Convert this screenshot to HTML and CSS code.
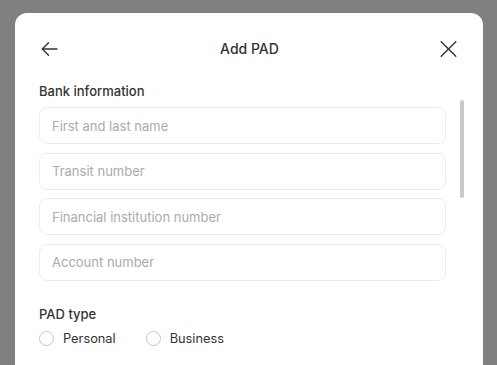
FILE: index.html
```html
<!DOCTYPE html>
<html lang="en">
<head>
    <meta charset="UTF-8">
    <meta name="viewport" content="width=device-width, initial-scale=1.0">
    <title>Add PAD</title>
    <link rel="stylesheet" href="styles.css">
</head>
<body>

    <div class="modal">
        <div class="modal-header">
            <button class="icon-button" aria-label="Back">
                <svg width="24" height="24" viewBox="0 0 24 24" fill="none" stroke="#333" stroke-width="1.4" stroke-linecap="round" stroke-linejoin="round">
                    <path d="M18 12H3.5"/>
                    <path d="M9.5 5.8L3.3 12l6.2 6.2"/>
                </svg>
            </button>
            <h1 class="modal-title">Add PAD</h1>
            <button class="icon-button" aria-label="Close">
                <svg width="24" height="24" viewBox="0 0 24 24" fill="none" stroke="#333" stroke-width="1.4" stroke-linecap="round">
                    <path d="M5.2 4.7l14.6 14.6"/>
                    <path d="M19.8 4.7L5.2 19.3"/>
                </svg>
            </button>
        </div>

        <div class="modal-body">
            <div class="form">
                <p class="section-title">Bank information</p>
                <div class="fields">
                    <input class="field" type="text" placeholder="First and last name">
                    <input class="field" type="text" placeholder="Transit number">
                    <input class="field" type="text" placeholder="Financial institution number">
                    <input class="field" type="text" placeholder="Account number">
                </div>

                <p class="section-title pad-type">PAD type</p>
                <div class="radio-row">
                    <label class="radio"><span class="radio-circle"></span>Personal</label>
                    <label class="radio"><span class="radio-circle"></span>Business</label>
                </div>
            </div>
            <div class="scrollbar"><div class="scroll-thumb"></div></div>
        </div>
    </div>

</body>
</html>
```

FILE: styles.css
```css
:root {
    --overlay-color: #808080;
    --white-color: #ffffff;
    --text-color: #333333;
    --placeholder-color: #ababab;
    --border-color: #ececec;
    --radio-border: #c4c4c4;
    --thumb-color: #c9c9c9;
    --font-family: Inter, "Noto Sans", Arial, sans-serif;
}
html, body {
    margin: 0;
    height: 100%;
    overflow: hidden;
    font-family: var(--font-family);
    color: var(--text-color);
    background-color: var(--overlay-color);
}
body {
    display: flex;
    flex-direction: column;
    padding: 13px 14px 0 15px;
    box-sizing: border-box;
}

/* --- MODAL --- */
.modal {
    flex: 1;
    overflow: hidden;
    background-color: var(--white-color);
    border-radius: 12px 12px 0 0;
    padding: 24px 0 0 24px;
}
.modal-header {
    display: flex;
    align-items: center;
    justify-content: space-between;
    width: 421px;
    height: 24px;
}
.icon-button {
    display: flex;
    padding: 0;
    border: none;
    background: none;
}
.modal-title {
    margin: 0;
    font-size: 14px;
    font-weight: 500;
    line-height: 24px;
}

/* --- BODY --- */
.modal-body {
    display: flex;
    margin-top: 22px;
}
.form {
    width: 407px;
}
.section-title {
    margin: 0 0 8px 0;
    font-size: 13px;
    font-weight: 500;
    line-height: 16px;
}
.fields {
    display: flex;
    flex-direction: column;
    gap: 8.67px;
}
.field {
    height: 37px;
    box-sizing: border-box;
    padding: 0 12px;
    border: 1px solid var(--border-color);
    border-radius: 8px;
    font-family: var(--font-family);
    font-size: 13px;
    color: var(--text-color);
    outline: none;
}
.field::placeholder {
    color: var(--placeholder-color);
}
.pad-type {
    margin-top: 25px;
}
.radio-row {
    display: flex;
    gap: 30px;
    height: 18px;
    align-items: center;
}
.radio {
    display: flex;
    align-items: center;
    gap: 9px;
    font-size: 12.8px;
}
.radio-circle {
    width: 15px;
    height: 15px;
    box-sizing: border-box;
    border: 1px solid var(--radio-border);
    border-radius: 50%;
}

/* --- SCROLLBAR --- */
.scrollbar {
    margin-left: 14px;
    padding-top: 17px;
}
.scroll-thumb {
    width: 4px;
    height: 98px;
    border-radius: 2px;
    background-color: var(--thumb-color);
}
```
